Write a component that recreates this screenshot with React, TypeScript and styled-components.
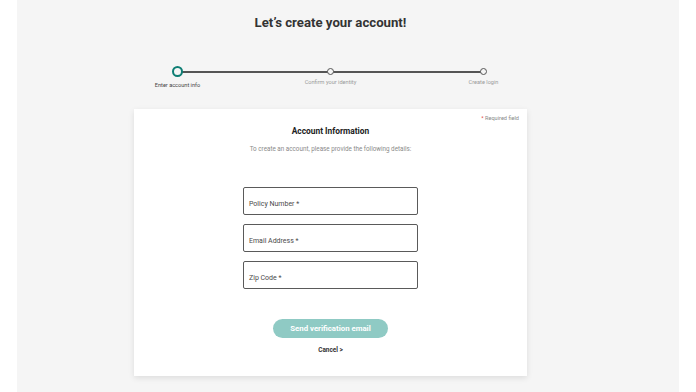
import React from 'react'
import styled, { createGlobalStyle } from 'styled-components'

const GlobalStyle = createGlobalStyle`
  html, body {
    margin: 0;
    padding: 0;
    background: #ffffff;
    font-family: Roboto, 'Liberation Sans', Arial, sans-serif;
  }
`

const Page = styled.div`
  width: 696px;
  height: 392px;
  overflow: hidden;
  display: flex;
`
const Main = styled.main`
  margin-left: 17px;
  width: 662px;
  height: 392px;
  background: #f5f5f5;
  padding-left: 117px;
  box-sizing: border-box;
`
const Column = styled.div`
  width: 393px;
  display: flex;
  flex-direction: column;
  align-items: center;
`
const Title = styled.h1`
  margin: 15px 0 0;
  font-size: 13.2px;
  line-height: 16px;
  font-weight: 700;
  color: #333333;
`
const Stepper = styled.div`
  margin-top: 35px;
  width: 306px;
  display: flex;
  align-items: flex-start;
`
const Step = styled.div`
  width: 0;
  display: flex;
  flex-direction: column;
  align-items: center;
`
const Dot = styled.div<{ $active?: boolean }>`
  position: relative;
  z-index: 1;
  flex: none;
  box-sizing: border-box;
  width: ${p => (p.$active ? '11px' : '7px')};
  height: ${p => (p.$active ? '11px' : '7px')};
  margin-top: ${p => (p.$active ? '0' : '2px')};
  border-radius: 50%;
  border: ${p => (p.$active ? '2px solid #0e7e74' : '1.5px solid #555555')};
  background: #f5f5f5;
`
const StepLabel = styled.span<{ $active?: boolean }>`
  margin-top: ${p => (p.$active ? '5px' : '4px')};
  white-space: nowrap;
  font-size: 5.6px;
  line-height: 7px;
  color: ${p => (p.$active ? '#444444' : '#9a9a9a')};
`
const Connector = styled.div`
  flex: 1;
  height: 2px;
  margin-top: 4.5px;
  background: #555555;
`
const Card = styled.section`
  margin-top: 20px;
  width: 393px;
  height: 267px;
  box-sizing: border-box;
  background: #ffffff;
  box-shadow: 0 2px 6px rgba(0, 0, 0, 0.1);
  display: flex;
  flex-direction: column;
  align-items: center;
  padding: 5px 8px 0;
`
const Required = styled.div`
  align-self: flex-end;
  font-size: 5.6px;
  line-height: 8px;
  color: #888888;
  span {
    color: #e0473d;
  }
`
const CardTitle = styled.h2`
  margin: 4px 0 0;
  font-size: 8.4px;
  line-height: 11px;
  font-weight: 700;
  color: #222222;
`
const Intro = styled.p`
  margin: 8px 0 0;
  font-size: 6.3px;
  line-height: 8px;
  color: #8a8a8a;
`
const Fields = styled.div`
  margin-top: 34px;
  display: flex;
  flex-direction: column;
  gap: 9px;
`
const Field = styled.label`
  width: 175px;
  height: 28px;
  box-sizing: border-box;
  border: 1px solid #5a5a5a;
  border-radius: 2px;
  display: flex;
  align-items: center;
  padding: 5px 0 0 5px;
  font-size: 7px;
  color: #4a4a4a;
`
const Button = styled.button`
  margin-top: 30px;
  width: 115px;
  height: 19px;
  border: none;
  border-radius: 10px;
  background: #8fcac4;
  color: #ffffff;
  font-family: Roboto, 'Liberation Sans', Arial, sans-serif;
  font-size: 7.8px;
  font-weight: 700;
  padding: 0;
`
const Cancel = styled.a`
  margin-top: 8px;
  font-size: 6.4px;
  line-height: 9px;
  font-weight: 700;
  color: #333333;
`

const steps = ['Enter account info', 'Confirm your identity', 'Create login']
const fields = ['Policy Number *', 'Email Address *', 'Zip Code *']

const App = () => (
  <Page>
    <GlobalStyle />
    <Main>
      <Column>
        <Title>Let’s create your account!</Title>
        <Stepper>
          {steps.map((s, i) => (
            <React.Fragment key={s}>
              {i > 0 && <Connector />}
              <Step>
                <Dot $active={i === 0} />
                <StepLabel $active={i === 0}>{s}</StepLabel>
              </Step>
            </React.Fragment>
          ))}
        </Stepper>
        <Card>
          <Required>
            <span>*</span> Required field
          </Required>
          <CardTitle>Account Information</CardTitle>
          <Intro>To create an account, please provide the following details:</Intro>
          <Fields>
            {fields.map(f => (
              <Field key={f}>{f}</Field>
            ))}
          </Fields>
          <Button>Send verification email</Button>
          <Cancel>Cancel &gt;</Cancel>
        </Card>
      </Column>
    </Main>
  </Page>
)

export default App
